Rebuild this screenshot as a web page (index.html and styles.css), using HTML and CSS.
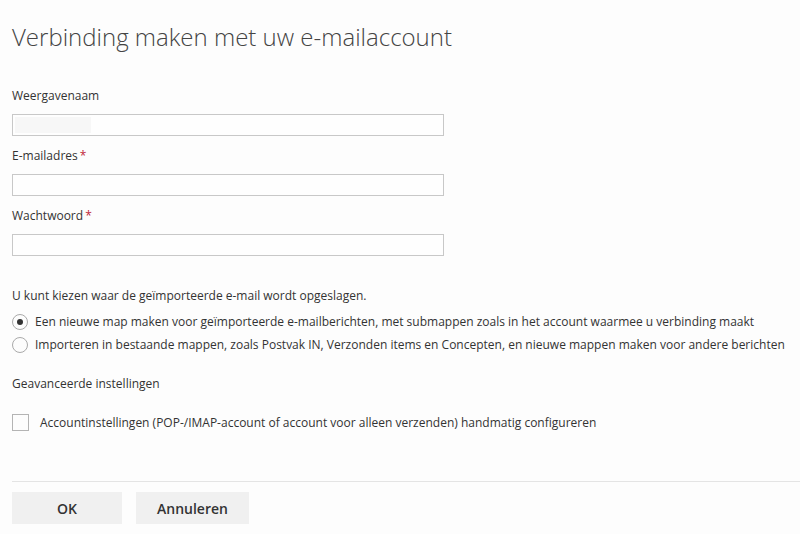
FILE: index.html
```html
<!DOCTYPE html>
<html lang="nl">
<head>
    <meta charset="UTF-8">
    <title>Verbinding maken met uw e-mailaccount</title>
    <link rel="stylesheet" href="styles.css">
</head>
<body>
    <div class="dialog">
        <h1 class="dialog-title">Verbinding maken met uw e-mailaccount</h1>

        <div class="field">
            <label class="field-label" for="display-name">Weergavenaam</label>
            <div class="text-input"><span class="blurred"></span></div>
        </div>
        <div class="field">
            <label class="field-label" for="email">E-mailadres<span class="required">*</span></label>
            <div class="text-input" id="email"></div>
        </div>
        <div class="field">
            <label class="field-label" for="password">Wachtwoord<span class="required">*</span></label>
            <div class="text-input" id="password"></div>
        </div>

        <p class="hint">U kunt kiezen waar de geïmporteerde e-mail wordt opgeslagen.</p>
        <div class="radio-row">
            <span class="radio checked"></span>
            <span>Een nieuwe map maken voor geïmporteerde e-mailberichten, met submappen zoals in het account waarmee u verbinding maakt</span>
        </div>
        <div class="radio-row">
            <span class="radio"></span>
            <span>Importeren in bestaande mappen, zoals Postvak IN, Verzonden items en Concepten, en nieuwe mappen maken voor andere berichten</span>
        </div>

        <p class="section-label">Geavanceerde instellingen</p>
        <div class="check-row">
            <span class="checkbox"></span>
            <span>Accountinstellingen (POP-/IMAP-account of account voor alleen verzenden) handmatig configureren</span>
        </div>

        <div class="footer">
            <button class="btn btn-ok">OK</button>
            <button class="btn btn-cancel">Annuleren</button>
        </div>
    </div>
</body>
</html>
```

FILE: styles.css
```css
:root {
    --bg-color: #fdfdfd;
    --text-color: #333333;
    --title-color: #444444;
    --border-color: #c8c8c8;
    --line-color: #e4e4e4;
    --button-bg: #f0f0f0;
    --required-color: #c0263a;
}

body {
    margin: 0;
    background-color: var(--bg-color);
    font-family: "Open Sans", "Noto Sans", sans-serif;
    font-size: 12px;
    color: var(--text-color);
}

.dialog {
    padding: 0 0 0 12px;
}

.dialog-title {
    margin: 0;
    padding-top: 20px;
    height: 87px;
    box-sizing: border-box;
    font-size: 24px;
    font-weight: 300;
    line-height: 34px;
    color: var(--title-color);
}

.field {
    display: flex;
    flex-direction: column;
    width: 432px;
    margin-bottom: 11px;
}

.field-label {
    line-height: 18px;
    margin-bottom: 9px;
}

.required {
    color: var(--required-color);
    margin-left: 2px;
}

.text-input {
    height: 22px;
    box-sizing: border-box;
    border: 1px solid var(--border-color);
    background-color: #fefefe;
    padding: 2px;
}

.blurred {
    display: block;
    width: 76px;
    height: 100%;
    background-color: #f7f7f7;
}

.hint {
    margin: 31px 0 5px;
    line-height: 18px;
}

.radio-row,
.check-row {
    display: flex;
    align-items: center;
    height: 23px;
}

.radio {
    width: 16px;
    height: 16px;
    box-sizing: border-box;
    border: 1px solid #aaaaaa;
    border-radius: 50%;
    margin-right: 7px;
    display: flex;
    align-items: center;
    justify-content: center;
    flex-shrink: 0;
}

.radio.checked::after {
    content: '';
    width: 6px;
    height: 6px;
    border-radius: 50%;
    background-color: #333333;
}

.section-label {
    margin: 19px 0 0;
    line-height: 18px;
}

.check-row {
    margin-top: 20px;
    height: 18px;
}

.checkbox {
    width: 17px;
    height: 17px;
    box-sizing: border-box;
    border: 1px solid #b4b4b4;
    margin-right: 11px;
    flex-shrink: 0;
}

.footer {
    margin-top: 50px;
    border-top: 1px solid var(--line-color);
    padding-top: 10px;
    display: flex;
    gap: 14px;
}

.btn {
    height: 32px;
    border: none;
    background-color: var(--button-bg);
    font-family: inherit;
    font-size: 14px;
    font-weight: 600;
    color: var(--text-color);
    cursor: pointer;
}

.btn-ok { width: 110px; }
.btn-cancel { width: 113px; }
```
